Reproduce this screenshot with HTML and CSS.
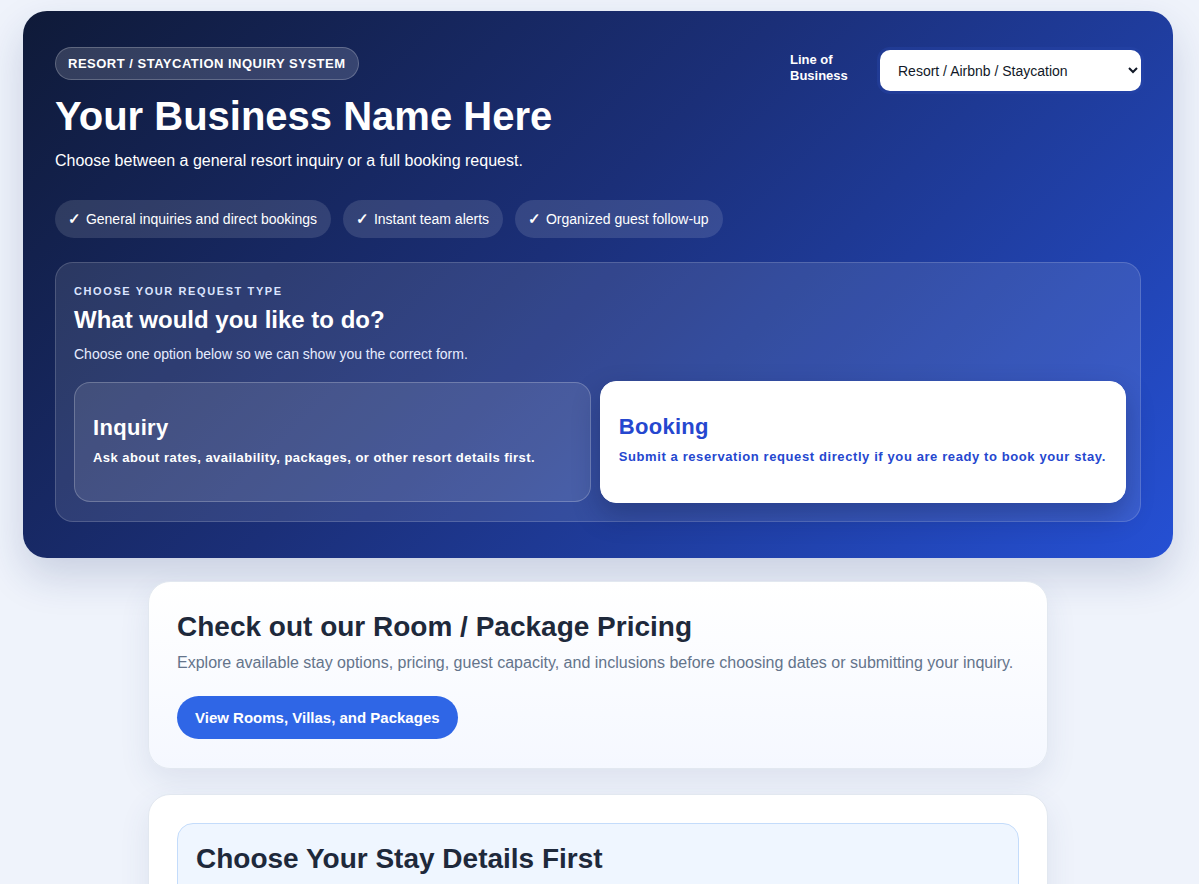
FILE: index.html
```html
<!DOCTYPE html>
<html lang="en">
<head>
  <meta charset="UTF-8">
  <meta name="viewport" content="width=device-width, initial-scale=1.0">
  <title>Resort Inquiry</title>
  <link rel="stylesheet" href="styles.css">
</head>
<body>
  <header class="hero">
    <div class="hero-top">
      <div class="hero-text">
        <div class="badge">Resort / Staycation Inquiry System</div>
        <h1>Your Business Name Here</h1>
        <p class="sub">Choose between a general resort inquiry or a full booking request.</p>
      </div>
      <div class="lob">
        <label for="lob">Line of Business</label>
        <select id="lob">
          <option>Resort / Airbnb / Staycation</option>
        </select>
      </div>
    </div>
    <ul class="chips">
      <li><b>✓</b> General inquiries and direct bookings</li>
      <li><b>✓</b> Instant team alerts</li>
      <li><b>✓</b> Organized guest follow-up</li>
    </ul>
    <section class="request">
      <div class="eyebrow">Choose your request type</div>
      <h2>What would you like to do?</h2>
      <p class="hint">Choose one option below so we can show you the correct form.</p>
      <div class="options">
        <div class="option">
          <h3>Inquiry</h3>
          <p>Ask about rates, availability, packages, or other resort details first.</p>
        </div>
        <div class="option active">
          <h3>Booking</h3>
          <p>Submit a reservation request directly if you are ready to book your stay.</p>
        </div>
      </div>
    </section>
  </header>

  <main>
    <section class="card pricing">
      <h2>Check out our Room / Package Pricing</h2>
      <p>Explore available stay options, pricing, guest capacity, and inclusions before choosing dates or submitting your inquiry.</p>
      <a class="btn" href="#">View Rooms, Villas, and Packages</a>
    </section>
    <section class="card">
      <div class="stay">
        <h2>Choose Your Stay Details First</h2>
      </div>
    </section>
  </main>
</body>
</html>
```
FILE: styles.css
```css
* {
  box-sizing: border-box;
}

body {
  margin: 0;
  padding: 11px 3px 40px 0;
  background: #eff3fb;
  font-family: "Liberation Sans", Arial, sans-serif;
  color: #1e293b;
}

h1, h2, h3, p, ul {
  margin: 0;
  padding: 0;
}

li {
  list-style: none;
}

.hero {
  width: 1150px;
  margin: 0 auto;
  padding: 36px 32px 36px;
  border-radius: 24px;
  color: #fff;
  background: linear-gradient(135deg, #0f1a38 0%, #1b2f78 45%, #2550d4 100%);
  box-shadow: 0 18px 40px rgba(30, 50, 110, 0.18);
}

.hero-top {
  display: flex;
  justify-content: space-between;
  align-items: flex-start;
}

.badge {
  display: inline-block;
  height: 33px;
  line-height: 31px;
  padding: 0 12px;
  border-radius: 17px;
  font-size: 13px;
  font-weight: bold;
  text-transform: uppercase;
  letter-spacing: 0.5px;
  background: rgba(255, 255, 255, 0.15);
  border: 1px solid rgba(255, 255, 255, 0.22);
}

.hero h1 {
  margin-top: 12px;
  font-size: 40px;
  line-height: 48px;
}

.sub {
  margin-top: 12px;
  font-size: 16px;
}

.lob {
  display: flex;
  align-items: center;
  gap: 28px;
  margin-top: 3px;
}

.lob label {
  width: 62px;
  margin-top: -6px;
  font-size: 13px;
  font-weight: bold;
  line-height: 16px;
}

.lob select {
  width: 261px;
  height: 41px;
  padding: 0 12px 0 14px;
  border: 0;
  border-radius: 10px;
  background: #fff;
  font-family: "Liberation Sans", Arial, sans-serif;
  font-size: 14px;
  color: #111827;
  box-shadow: 0 0 0 3px rgba(40, 70, 170, 0.4);
}

.chips {
  display: flex;
  gap: 12px;
  margin-top: 30px;
}

.chips li {
  height: 38px;
  line-height: 38px;
  padding: 0 14px 0 13px;
  border-radius: 19px;
  font-size: 14px;
  background: rgba(255, 255, 255, 0.12);
}

.chips b {
  font-size: 15px;
  margin-right: 1px;
}

.request {
  margin-top: 24px;
  padding: 22px 14px 18px 18px;
  border-radius: 18px;
  background: rgba(255, 255, 255, 0.1);
  border: 1px solid rgba(255, 255, 255, 0.16);
}

.eyebrow {
  font-size: 11px;
  font-weight: bold;
  letter-spacing: 1.6px;
  text-transform: uppercase;
  color: #dbe4ff;
}

.request h2 {
  margin-top: 8px;
  font-size: 24px;
  line-height: 30px;
}

.hint {
  margin-top: 11px;
  font-size: 14px;
  color: #e6ecff;
}

.options {
  display: flex;
  gap: 9px;
  margin-top: 20px;
}

.option {
  flex: 1;
  height: 120px;
  padding: 32px 18px 0;
  border-radius: 16px;
  background: rgba(255, 255, 255, 0.1);
  border: 1px solid rgba(255, 255, 255, 0.22);
}

.option h3 {
  font-size: 22px;
  line-height: 26px;
  letter-spacing: 0.3px;
}

.option p {
  margin-top: 9px;
  font-size: 13px;
  font-weight: bold;
  letter-spacing: 0.45px;
}

.option.active {
  flex: 1.02;
  height: 122px;
  margin-top: -1px;
  background: #fff;
  border-color: #fff;
  color: #2547cf;
  box-shadow: 0 12px 28px rgba(10, 20, 60, 0.3);
}

.option.active p {
  letter-spacing: 0.6px;
}

main {
  width: 900px;
  margin: 23px auto 0;
}

.card {
  padding: 28px 28px 29px;
  margin-bottom: 25px;
  border-radius: 22px;
  background: #fff;
  border: 1px solid #e2e8f0;
  box-shadow: 0 12px 30px rgba(60, 80, 130, 0.1);
}

.pricing {
  background: linear-gradient(180deg, #fff 0%, #f5f8ff 100%);
}

.card h2 {
  font-size: 28px;
  line-height: 34px;
}

.pricing p {
  margin-top: 10px;
  font-size: 16px;
  color: #64748b;
}

.btn {
  display: inline-block;
  margin-top: 24px;
  height: 43px;
  line-height: 43px;
  padding: 0 18px;
  border-radius: 22px;
  background: #2f66e6;
  color: #fff;
  font-size: 15px;
  font-weight: bold;
  text-decoration: none;
}

.stay {
  padding: 18px 18px 60px;
  border-radius: 16px;
  background: #eff6ff;
  border: 1px solid #c4dcfb;
}
```
